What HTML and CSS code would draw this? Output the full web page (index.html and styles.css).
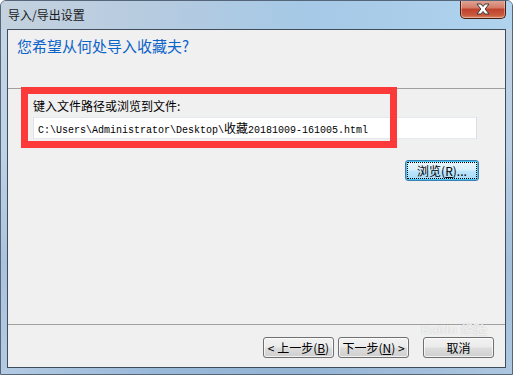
FILE: index.html
```html
<!DOCTYPE html>
<html>
<head>
    <meta charset="UTF-8">
    <title>导入/导出设置</title>
    <link rel="stylesheet" href="styles.css">
</head>
<body>

    <div class="window">
        <div class="titlebar">
            <span class="title">导入/导出设置</span>
            <button class="close-btn" title="关闭">
                <svg width="16" height="12" viewBox="0 0 16 12">
                    <path d="M2 1 H6 L8 3.5 L10 1 H14 L10.2 6 L14 11 H10 L8 8.5 L6 11 H2 L5.8 6 Z" fill="#ffffff" stroke="#3a3a3a" stroke-width="1"/>
                </svg>
            </button>
        </div>

        <div class="client">
            <div class="wizard-header">
                <h1>您希望从何处导入收藏夫?</h1>
            </div>
            <div class="separator"></div>

            <div class="wizard-body">
                <label class="field-label" for="path">键入文件路径或浏览到文件:</label>
                <div class="path-input" id="path">C:\Users\Administrator\Desktop\<span class="cjk">收藏</span>20181009-161005.html</div>
                <div class="browse-row">
                    <button class="btn btn-focus"><span class="focus-rect">浏览(<u>R</u>)...</span></button>
                </div>
            </div>

            <div class="separator"></div>
            <div class="wizard-footer">
                <button class="btn">&lt; 上一步(<u>B</u>)</button>
                <button class="btn">下一步(<u>N</u>) &gt;</button>
                <button class="btn btn-cancel">取消</button>
            </div>
        </div>

        <!-- annotation overlays -->
        <div class="highlight-box"></div>
        <div class="watermark">Bai<b>du</b> 经验</div>
    </div>

</body>
</html>
```

FILE: styles.css
```css
body {
    margin: 0;
    background-color: #ffffff;
    font-family: "Noto Sans CJK SC", "DejaVu Sans", sans-serif;
    font-size: 12px;
}

.window {
    position: relative;
    width: 513px;
    height: 375px;
    box-sizing: border-box;
    display: flex;
    flex-direction: column;
    border: 1px solid #56667a;
    border-radius: 6px 6px 0 0;
    background:
        linear-gradient(90deg, rgba(255,255,255,0.25), rgba(255,255,255,0) 30%, rgba(120,150,180,0.15) 60%, rgba(255,255,255,0.2)),
        linear-gradient(180deg, #b3c7dc 0%, #a9c4df 40%, #8fb0d2 70%, #9ab9d9 100%);
    overflow: hidden;
}

.titlebar {
    height: 28px;
    display: flex;
    align-items: flex-start;
    justify-content: space-between;
    padding-left: 7px;
    background: linear-gradient(90deg, #c4d2df 0%, #b6cbe0 30%, #a5c9e6 60%, #b0d4ee 100%);
}

.title {
    margin-top: 6px;
    color: #1a1a1a;
    font-size: 12px;
    line-height: 16px;
}

.close-btn {
    width: 46px;
    height: 19px;
    margin-right: 6px;
    margin-top: -1px;
    padding: 0;
    border: 1px solid #4a1c14;
    border-top: 0;
    border-radius: 0 0 5px 5px;
    background: linear-gradient(180deg, #e2a798 0%, #d37a66 45%, #c0402b 50%, #c95a3e 85%, #dc8a66 100%);
    box-shadow: inset 0 0 0 1px rgba(255,255,255,0.35);
    display: flex;
    align-items: center;
    justify-content: center;
}

.close-btn svg {
    display: block;
}

.client {
    flex: 1;
    margin: 0 6px 6px 6px;
    border: 1px solid #3e4c5c;
    background-color: #f0f0f0;
    display: flex;
    flex-direction: column;
}

.wizard-header {
    height: 58px;
    padding: 6px 0 0 9px;
    box-sizing: border-box;
}

.wizard-header h1 {
    margin: 0;
    font-weight: normal;
    font-size: 15px;
    line-height: 20px;
    color: #0c63c8;
}

.separator {
    height: 1px;
    background-color: #a0a0a0;
}

.wizard-body {
    flex: 1;
    padding: 9px 28px 0 25px;
    display: flex;
    flex-direction: column;
}

.field-label {
    color: #000;
    line-height: 16px;
}

.path-input {
    margin-top: 3px;
    height: 22px;
    box-sizing: border-box;
    padding: 0 4px;
    border: 1px solid #abadb3;
    border-top-color: #e3e9ef;
    border-left-color: #e2e3ea;
    border-right-color: #dbdfe6;
    border-bottom-color: #e3e9ef;
    background-color: #ffffff;
    font-family: "Liberation Mono", "Noto Sans CJK SC", monospace;
    font-size: 10px;
    line-height: 20px;
    color: #000;
    white-space: nowrap;
}

.path-input .cjk {
    font-family: "Noto Sans CJK SC", sans-serif;
    font-size: 12px;
}

.browse-row {
    margin-top: 21px;
    display: flex;
    justify-content: flex-end;
    margin-right: -2px;
}

.btn {
    width: 71px;
    height: 21px;
    padding: 0;
    border: 1px solid #707070;
    border-radius: 3px;
    background: linear-gradient(180deg, #f2f2f2 0%, #ebebeb 48%, #dddddd 52%, #cfcfcf 100%);
    box-shadow: inset 0 0 0 1px rgba(255,255,255,0.7);
    font-family: "Noto Sans CJK SC", "DejaVu Sans", sans-serif;
    font-size: 12px;
    line-height: 17px;
    color: #000;
}

.btn-focus {
    width: 74px;
    border-color: #3c7fb1;
    background: linear-gradient(180deg, #eaf6fd 0%, #d9f0fc 48%, #bee6fd 52%, #a7d9f5 100%);
    box-shadow: inset 0 0 0 1px #48c6f5;
    padding: 2px;
}

.focus-rect {
    display: block;
    height: 15px;
    line-height: 15px;
    outline: 1px dotted #000;
}

.wizard-footer {
    height: 42px;
    box-sizing: border-box;
    padding: 12px 11px 0 0;
    display: flex;
    justify-content: flex-end;
    align-items: flex-start;
    gap: 4px;
}

.btn-cancel {
    margin-left: 10px;
}

.highlight-box {
    position: absolute;
    left: 20px;
    top: 86px;
    width: 376px;
    height: 61px;
    box-sizing: border-box;
    border: 7px solid #fd3a3a;
}

.watermark {
    position: absolute;
    left: 420px;
    top: 322px;
    font-family: "Liberation Sans", sans-serif;
    font-size: 13px;
    font-weight: bold;
    line-height: 14px;
    color: rgba(255, 255, 255, 0.75);
    text-shadow: 0 0 1px rgba(150, 150, 150, 0.6);
    pointer-events: none;
}
```
